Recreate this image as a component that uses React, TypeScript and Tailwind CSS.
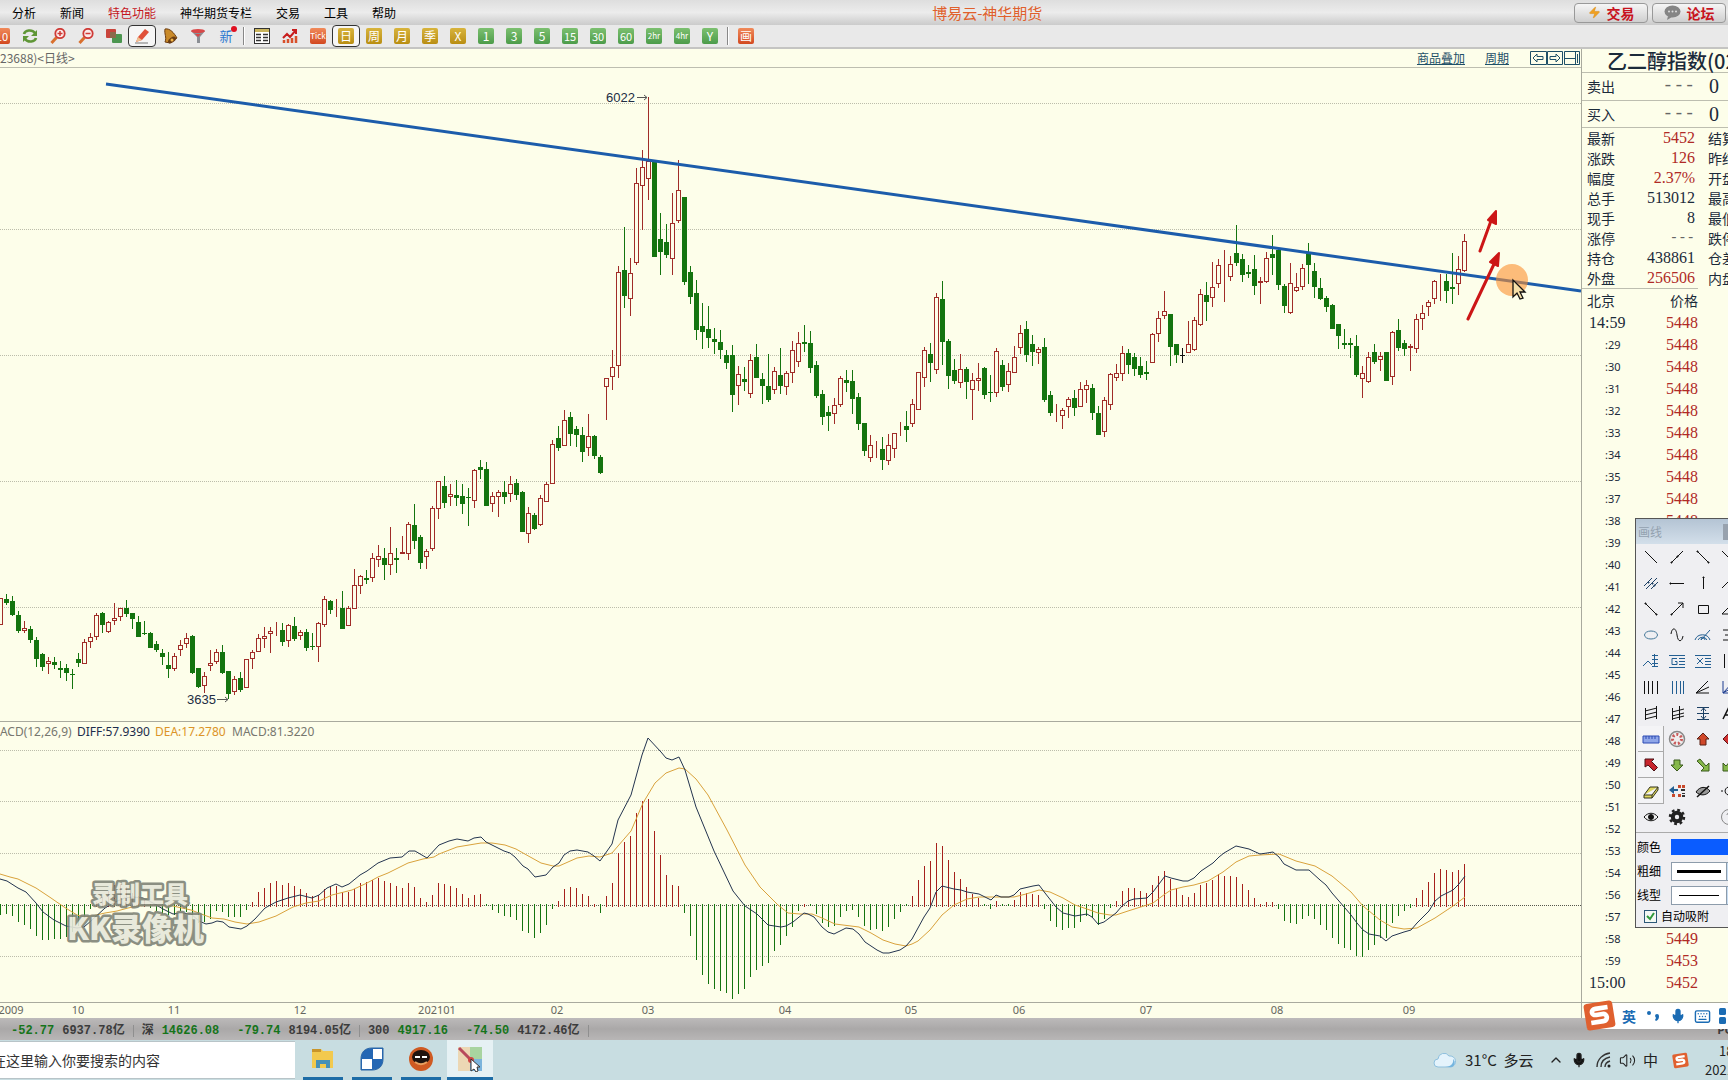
import React from 'react';
import { ChevronUp, Mic, Volume2, Zap, Keyboard } from 'lucide-react';

type Candle = [kind: 'r' | 'g' | 'k', high: number, top: number, bottom: number, low: number];

// One candle every 6 units: kind, high, body top, body bottom, low
const CANDLES: Candle[] = [
  ['r', 598, 598, 625, 625], ['g', 594, 599, 603, 605], ['g', 596, 601, 615, 616], ['g', 611, 615, 631, 633],
  ['r', 621, 628, 631, 633], ['g', 626, 629, 640, 643], ['g', 637, 640, 659, 667], ['g', 653, 654, 667, 671],
  ['r', 657, 661, 664, 674], ['g', 657, 662, 665, 669], ['g', 661, 668, 670, 678], ['g', 664, 668, 673, 681],
  ['g', 669, 674, 675, 689], ['g', 653, 659, 663, 667], ['r', 639, 642, 664, 664], ['r', 633, 637, 642, 648],
  ['r', 613, 615, 637, 640], ['g', 612, 613, 625, 633], ['r', 621, 622, 632, 633], ['r', 603, 618, 621, 625],
  ['r', 608, 608, 617, 621], ['g', 600, 608, 614, 617], ['g', 613, 613, 619, 629], ['g', 616, 622, 637, 637],
  ['g', 621, 633, 634, 635], ['g', 632, 633, 648, 648], ['g', 641, 644, 650, 652], ['g', 649, 653, 657, 665],
  ['g', 652, 665, 669, 678], ['r', 653, 656, 669, 671], ['r', 640, 645, 650, 656], ['r', 633, 638, 644, 648],
  ['g', 635, 636, 673, 674], ['g', 668, 668, 687, 688], ['r', 672, 676, 686, 693], ['r', 650, 663, 666, 671],
  ['r', 649, 652, 662, 664], ['g', 645, 652, 673, 674], ['g', 671, 671, 694, 699], ['r', 676, 679, 692, 695],
  ['g', 672, 678, 690, 692], ['r', 659, 659, 688, 688], ['r', 650, 652, 659, 669], ['r', 634, 638, 652, 652],
  ['r', 627, 636, 639, 648], ['r', 627, 631, 634, 653], ['r', 622, 630, 631, 636], ['g', 623, 630, 642, 646],
  ['r', 624, 625, 641, 647], ['g', 617, 626, 639, 641], ['r', 630, 632, 636, 640], ['g', 629, 632, 648, 651],
  ['g', 633, 646, 647, 650], ['r', 622, 623, 647, 662], ['r', 596, 599, 625, 627], ['g', 600, 601, 610, 614],
  ['r', 599, 609, 610, 617], ['g', 591, 608, 629, 629], ['r', 606, 608, 626, 626], ['r', 569, 585, 609, 609],
  ['r', 575, 576, 586, 594], ['g', 570, 578, 580, 584], ['r', 553, 558, 578, 582], ['r', 545, 556, 560, 567],
  ['g', 548, 558, 565, 580], ['r', 527, 553, 565, 575], ['g', 548, 558, 560, 573], ['r', 536, 552, 554, 554],
  ['r', 522, 524, 554, 560], ['g', 504, 525, 541, 549], ['g', 535, 537, 563, 569], ['r', 549, 551, 557, 569],
  ['r', 506, 508, 549, 551], ['r', 481, 481, 509, 519], ['g', 476, 486, 503, 508], ['r', 484, 494, 497, 506],
  ['g', 480, 495, 498, 506], ['g', 484, 496, 504, 514], ['g', 488, 497, 498, 526], ['r', 469, 470, 501, 508],
  ['g', 460, 467, 470, 479], ['g', 462, 469, 506, 506], ['r', 492, 496, 504, 512], ['r', 490, 492, 497, 517],
  ['g', 481, 492, 497, 504], ['r', 476, 484, 494, 502], ['g', 479, 483, 495, 500], ['g', 491, 492, 532, 532],
  ['r', 507, 513, 534, 543], ['g', 513, 515, 529, 530], ['r', 495, 498, 525, 526], ['r', 482, 484, 502, 502],
  ['r', 440, 444, 484, 484], ['g', 426, 438, 448, 451], ['r', 410, 420, 446, 446], ['g', 412, 417, 434, 446],
  ['g', 426, 429, 435, 447], ['g', 427, 435, 452, 462], ['r', 414, 436, 448, 456], ['g', 435, 436, 456, 459],
  ['g', 455, 457, 473, 474], ['r', 378, 378, 387, 420], ['r', 350, 367, 377, 390], ['r', 266, 272, 366, 378],
  ['g', 227, 270, 296, 308], ['r', 258, 273, 299, 316], ['r', 168, 183, 263, 265], ['r', 150, 167, 186, 230],
  ['r', 97, 161, 179, 200], ['g', 160, 161, 257, 257], ['g', 213, 239, 252, 275], ['g', 224, 242, 255, 258],
  ['r', 193, 223, 259, 275], ['r', 160, 190, 221, 223], ['g', 197, 197, 282, 285], ['g', 266, 272, 297, 304],
  ['g', 280, 293, 330, 340], ['g', 303, 326, 332, 349], ['g', 306, 329, 338, 348], ['g', 328, 339, 342, 354],
  ['g', 330, 342, 350, 359], ['g', 350, 355, 363, 369], ['g', 345, 355, 395, 412], ['r', 366, 374, 386, 405],
  ['g', 367, 379, 382, 391], ['r', 354, 360, 394, 398], ['g', 344, 357, 378, 378], ['g', 373, 379, 386, 404],
  ['g', 354, 386, 400, 402], ['r', 367, 371, 390, 394], ['g', 348, 375, 386, 394], ['r', 371, 373, 387, 395],
  ['r', 341, 350, 373, 383], ['r', 332, 343, 362, 367], ['g', 325, 342, 344, 352], ['g', 331, 343, 368, 373],
  ['g', 361, 365, 396, 398], ['g', 390, 394, 417, 425], ['g', 406, 412, 416, 431], ['r', 398, 405, 414, 424],
  ['r', 376, 378, 405, 407], ['g', 370, 380, 383, 392], ['g', 370, 381, 399, 414], ['g', 393, 397, 424, 430],
  ['g', 423, 423, 451, 456], ['r', 435, 445, 458, 462], ['r', 441, 443, 444, 458], ['g', 437, 449, 460, 470],
  ['r', 434, 445, 461, 465], ['r', 433, 433, 449, 458], ['r', 422, 432, 433, 436], ['g', 411, 426, 430, 442],
  ['r', 399, 404, 424, 427], ['r', 372, 372, 410, 410], ['r', 347, 350, 378, 387], ['g', 343, 354, 363, 382],
  ['r', 293, 297, 370, 374], ['g', 281, 299, 342, 365], ['g', 339, 341, 376, 389], ['g', 359, 370, 381, 384],
  ['r', 354, 369, 383, 388], ['g', 367, 369, 382, 399], ['r', 373, 380, 390, 420], ['r', 363, 378, 381, 391],
  ['g', 367, 368, 395, 399], ['g', 375, 392, 393, 402], ['r', 348, 351, 393, 397], ['g', 360, 365, 387, 391],
  ['r', 363, 371, 385, 392], ['r', 346, 357, 373, 373], ['r', 325, 333, 348, 354], ['g', 321, 329, 355, 362],
  ['g', 335, 344, 352, 366], ['r', 347, 349, 353, 364], ['g', 338, 347, 400, 402], ['g', 391, 395, 413, 416],
  ['r', 404, 410, 411, 422], ['r', 408, 410, 416, 429], ['r', 397, 399, 407, 418], ['g', 390, 398, 408, 416],
  ['r', 382, 389, 407, 407], ['r', 380, 385, 390, 403], ['g', 384, 388, 413, 420], ['g', 406, 413, 435, 435],
  ['r', 397, 400, 432, 437], ['r', 373, 374, 405, 410], ['r', 364, 373, 378, 381], ['r', 346, 353, 374, 381],
  ['g', 349, 353, 365, 374], ['g', 353, 357, 369, 376], ['g', 357, 366, 375, 378], ['g', 361, 372, 374, 380],
  ['r', 333, 334, 363, 363], ['r', 311, 318, 334, 342], ['r', 291, 311, 316, 319], ['g', 314, 314, 347, 366],
  ['g', 344, 344, 355, 363], ['k', 348, 355, 355, 363], ['r', 321, 344, 353, 353], ['r', 317, 320, 350, 351],
  ['r', 289, 294, 325, 326], ['g', 282, 295, 302, 321], ['r', 262, 287, 298, 307], ['r', 259, 265, 284, 288],
  ['r', 250, 279, 280, 302], ['r', 256, 264, 277, 281], ['g', 225, 253, 263, 266], ['g', 254, 259, 275, 282],
  ['g', 265, 272, 274, 278], ['g', 255, 269, 286, 295], ['r', 277, 281, 283, 304], ['r', 252, 258, 282, 283],
  ['g', 235, 254, 258, 275], ['g', 249, 250, 285, 290], ['g', 284, 286, 306, 313], ['r', 263, 283, 313, 314],
  ['r', 273, 287, 291, 292], ['r', 264, 268, 287, 290], ['g', 243, 254, 265, 284], ['g', 263, 271, 287, 298],
  ['g', 278, 288, 299, 300], ['g', 296, 298, 307, 312], ['g', 304, 305, 329, 329], ['g', 324, 324, 336, 349],
  ['g', 329, 343, 345, 349], ['g', 338, 343, 345, 358], ['g', 335, 346, 375, 377], ['r', 366, 373, 379, 398],
  ['r', 352, 357, 382, 383], ['g', 344, 352, 362, 364], ['r', 352, 356, 360, 371], ['g', 352, 352, 381, 381],
  ['r', 331, 332, 377, 385], ['g', 319, 330, 348, 351], ['g', 340, 343, 349, 356], ['r', 344, 346, 348, 371],
  ['r', 314, 319, 349, 353], ['r', 305, 313, 319, 330], ['r', 300, 302, 307, 316], ['r', 280, 281, 299, 304],
  ['r', 274, 283, 284, 301], ['g', 274, 281, 291, 303], ['g', 253, 287, 289, 304], ['r', 256, 269, 284, 295],
  ['r', 234, 241, 271, 272],
];

const HISTOGRAM = [
  -9, -8, -10, -16, -19, -23, -30, -34, -34, -33, -33, -31, -26, -20, -12, -3, 3, 8, 14, 20, 21, 18, 12, 9, 5,
  -2, -5, -8, -9, -9, -5, -6, -14, -17, -16, -13, -5, -6, -11, -11, -11, -4, 3, 13, 17, 22, 24, 20, 22, 19,
  16, 12, 9, 10, 16, 19, 19, 13, 13, 16, 22, 23, 25, 27, 24, 22, 19, 17, 22, 18, 7, 3, 10, 22, 21,
  19, 17, 11, 7, 10, 11, 0, -4, -7, -10, -11, -14, -25, -27, -32, -27, -19, -3, 4, 16, 18, 17, 11, 9, 1,
  -7, 9, 22, 52, 63, 69, 92, 104, 106, 74, 50, 30, 20, 19, -7, -30, -54, -69, -78, -83, -85, -87, -93, -88, -83,
  -71, -64, -60, -57, -45, -39, -30, -21, -5, 1, 0, -8, -17, -21, -20, -11, -5, -4, -11, -20, -24, -23, -25, -21, -13,
  -6, 0, 9, 25, 39, 44, 62, 59, 45, 33, 26, 18, 11, 7, 0, -3, 4, 0, 0, 5, 13, 12, 11, 10, -3,
  -15, -21, -24, -22, -22, -16, -10, -12, -19, -13, -2, 4, 14, 17, 17, 14, 12, 20, 29, 34, 26, 17, 10, 8, 12,
  20, 22, 25, 31, 29, 29, 28, 21, 15, 7, 1, 3, 3, -3, -15, -17, -18, -13, -10, -13, -19, -24, -32, -38, -42,
  -44, -50, -51, -44, -39, -32, -32, -17, -10, -5, -2, 7, 15, 23, 32, 36, 35, 33, 35, 41,
];

const DIFF =
  '0,879 7,881 18,888 26,892 36,903 43,912 54,920 66,926 77,928 84,927 92,920 105,908 115,902 125,898 133,897 143,898 153,903 163,909 173,914 181,913 191,914 199,921 206,924 212,923 217,921 223,922 229,927 235,928 241,929 247,926 255,919 265,908 276,902 288,898 300,895 312,898 319,895 327,888 336,884 342,887 349,884 360,875 367,871 378,863 390,858 402,857 409,851 415,851 427,858 439,845 449,841 457,839 468,841 474,838 481,837 486,842 504,851 510,853 515,857 523,866 528,869 535,877 546,875 553,867 559,863 564,855 570,851 577,850 588,852 594,856 600,861 612,844 618,820 631,795 642,755 648,738 661,752 666,758 672,760 679,757 685,770 696,807 714,851 733,891 745,906 757,914 768,925 781,927 786,926 793,922 804,913 808,914 814,917 822,927 828,932 834,934 840,931 846,928 853,929 859,934 865,942 871,946 877,950 883,953 889,953 900,950 906,946 912,939 918,928 924,917 930,908 936,892 942,886 954,889 961,890 967,892 979,894 991,900 996,895 1001,897 1009,897 1014,895 1020,889 1033,886 1039,885 1045,893 1056,907 1063,913 1075,916 1087,914 1092,917 1098,924 1104,922 1116,913 1122,906 1128,901 1134,899 1147,898 1153,892 1165,876 1171,878 1183,881 1188,881 1194,878 1201,871 1213,863 1219,857 1224,853 1236,846 1249,849 1260,854 1267,853 1273,852 1279,857 1284,864 1296,870 1309,870 1320,880 1326,885 1332,893 1345,908 1351,915 1357,923 1363,930 1369,934 1380,936 1386,941 1392,936 1404,932 1411,930 1417,923 1429,911 1435,901 1441,896 1453,890 1459,884 1465,876';

const DEA =
  '0,874 10,877 18,879 36,888 51,898 64,907 77,915 84,917 92,916 105,913 117,911 128,908 138,906 153,905 173,906 191,910 204,915 212,918 224,919 235,922 247,924 259,922 276,916 293,907 306,903 319,901 332,895 352,890 367,883 378,877 388,873 408,863 423,859 434,857 439,854 457,847 481,843 492,843 505,845 516,849 523,853 541,863 553,866 559,866 577,858 589,856 600,857 612,853 618,846 631,831 643,803 655,783 666,773 679,768 685,769 696,779 708,795 727,830 745,865 760,887 778,905 788,913 800,914 812,914 822,918 835,924 859,927 871,933 883,940 895,944 906,946 912,944 918,941 930,930 942,915 954,905 967,899 979,897 991,897 1014,897 1026,894 1039,890 1050,892 1063,898 1075,905 1087,909 1098,913 1110,915 1116,915 1128,911 1147,905 1153,903 1165,894 1171,890 1183,887 1194,885 1208,881 1223,872 1236,862 1249,856 1260,855 1279,854 1296,861 1315,866 1332,876 1351,892 1363,906 1380,920 1392,927 1404,929 1417,928 1435,918 1453,906 1465,897';

const MONTHS: [string, number][] = [
  ['10', 78], ['11', 174], ['12', 300], ['202101', 437], ['02', 557], ['03', 648], ['04', 785],
  ['05', 911], ['06', 1019], ['07', 1146], ['08', 1277], ['09', 1409],
];

const COLORS = { r: '#a02c28', g: '#14740f', k: '#111111' };

const MENU = ['分析', '新闻', '特色功能', '神华期货专栏', '交易', '工具', '帮助'];

function MenuBar() {
  return (
    <header className="flex h-[25px] shrink-0 items-center bg-gradient-to-b from-[#dedede] via-[#ececec] to-[#cbcbcb] px-3">
      <nav className="flex w-[54%] gap-6">
        {MENU.map((m) => (
          <button key={m} className={m === '特色功能' ? 'text-xs text-[#c4161c]' : 'text-xs text-black'}>
            {m}
          </button>
        ))}
      </nav>
      <h1 className="flex-1 text-[15px] leading-5 text-[#e0602c]">博易云-神华期货</h1>
      <div className="-mr-2.5 flex gap-1">
        <button className="flex h-5 w-[74px] items-center justify-center gap-1.5 rounded border border-[#999] bg-gradient-to-b from-[#f6f6f6] to-[#cfcfcf] text-sm leading-4 font-bold text-[#c8141e]">
          <Zap size={13} fill="#f0a020" stroke="#d98a10" strokeWidth={1} />
          交易
        </button>
        <button className="flex h-5 w-[74px] items-center justify-center gap-1.5 rounded border border-[#999] bg-gradient-to-b from-[#f6f6f6] to-[#cfcfcf] text-sm leading-4 font-bold text-[#c8141e]">
          <svg width="17" height="15" viewBox="0 0 17 15">
            <ellipse cx="8.500" cy="6.500" rx="8" ry="6" fill="#858585" />
            <path d="M4 11 3 15l5-3z" fill="#858585" />
            <circle cx="5" cy="6.500" r="1" fill="#ddd" />
            <circle cx="8.500" cy="6.500" r="1" fill="#ddd" />
            <circle cx="12" cy="6.500" r="1" fill="#ddd" />
          </svg>
          论坛
        </button>
      </div>
    </header>
  );
}

function Slot({ label, active, children }: { label: string; active?: boolean; children: React.ReactNode }) {
  return (
    <button
      aria-label={label}
      className={
        active
          ? 'flex h-[22px] w-7 shrink-0 items-center justify-center rounded border border-[#333] bg-[#f6f6f6]'
          : 'flex h-[22px] w-7 shrink-0 items-center justify-center'
      }
    >
      {children}
    </button>
  );
}

function Tile({ text, tone }: { text: string; tone: 'gold' | 'green' | 'red' }) {
  const bg = {
    gold: 'bg-gradient-to-b from-[#d8b43c] to-[#b98e10]',
    green: 'bg-gradient-to-b from-[#7cc070] to-[#4c9c4a]',
    red: 'bg-gradient-to-b from-[#f08a5a] to-[#d2481e]',
  }[tone];
  const size = text.length > 2 ? 'text-[8px]' : text.length > 1 ? 'text-[11px]' : 'text-xs';
  return (
    <span className={`flex h-4 w-4 items-center justify-center rounded-xs leading-4 text-white ${size} ${bg}`}>{text}</span>
  );
}

function Magnifier({ sign }: { sign: string }) {
  return (
    <svg width="16" height="16" viewBox="0 0 16 16" fill="none">
      <path d="M6.500 9.500 1.500 15" stroke="#d9702e" strokeWidth="3" />
      <circle cx="10" cy="5.500" r="4.700" fill="#fbeaea" stroke="#cf3a36" strokeWidth="1.800" />
      <path d={sign} stroke="#cf3a36" strokeWidth="1.500" />
    </svg>
  );
}

function Toolbar() {
  return (
    <div className="flex h-6 shrink-0 items-start overflow-hidden border-b-2 border-[#c4c4c2] bg-[#e9e9e9]">
      <div className="-ml-3 flex items-center">
        <Slot label="报价"><Tile text="10" tone="red" /></Slot>
        <Slot label="刷新">
          <svg width="16" height="16" viewBox="0 0 16 16" fill="none" stroke="#5f9636" strokeWidth="2.600">
            <path d="M2 6c1-4 8-5 11-1M14 10c-1 4-8 5-11 1" />
            <path d="M15 2v6H9zM1 14V8h6z" fill="#5f9636" stroke="none" />
          </svg>
        </Slot>
        <Slot label="放大"><Magnifier sign="M7.500 5.500h5M10 3v5" /></Slot>
        <Slot label="缩小"><Magnifier sign="M7.500 5.500h5" /></Slot>
        <Slot label="叠加">
          <svg width="16" height="16" viewBox="0 0 16 16">
            <rect x="0" y="1" width="10" height="9" rx="1" fill="#c9453c" />
            <rect x="6" y="6" width="10" height="9" rx="1" fill="#4c9650" />
            <rect x="4" y="4" width="6" height="6" fill="#8c6a4c" />
          </svg>
        </Slot>
        <Slot label="画线" active>
          <svg width="16" height="16" viewBox="0 0 16 16">
            <path d="M2 14 4 9 11 1l4 3-7 8z" fill="#e0513a" />
            <path d="M2 14 4 9l4 3z" fill="#f0c090" />
            <path d="M1 15h13" stroke="#777" />
          </svg>
        </Slot>
        <Slot label="预警">
          <svg width="16" height="16" viewBox="0 0 16 16">
            <path d="M3 1c5-1 9 4 12 9l-7 5-5-1C5 9 2 6 3 1z" fill="#c98a2a" stroke="#6b3c12" />
            <ellipse cx="10" cy="12" rx="4.500" ry="2.500" transform="rotate(-35 10 12)" fill="#6b3c12" />
            <circle cx="10" cy="12" r="1.500" fill="#f2b84a" />
          </svg>
        </Slot>
        <Slot label="筛选">
          <svg width="16" height="16" viewBox="0 0 16 16">
            <path d="M1 3h14l-5 6v6H7V9z" fill="#8b8f94" />
            <ellipse cx="8" cy="3" rx="7" ry="2" fill="#d94848" />
            <path d="M5 6h6L8 9z" fill="#d94848" />
          </svg>
        </Slot>
        <Slot label="新">
          <span className="relative text-[13px] leading-4 text-[#2d78d0]">
            新<i className="absolute -top-0.5 -right-1 h-1.5 w-1.5 rounded-full bg-[#e01020]" />
          </span>
        </Slot>
        <span className="mx-[3px] h-[18px] w-0.5 border-r border-white bg-[#888]" />
        <Slot label="列表">
          <svg width="16" height="16" viewBox="0 0 16 16">
            <rect x="0.500" y="0.500" width="15" height="15" fill="#fff" stroke="#333" />
            <path d="M1 1h14v3H1z" fill="#c9b45c" />
            <path d="M2 6.500h5M9 6.500h5M2 9.500h5M9 9.500h5M2 12.500h5M9 12.500h5" stroke="#333" strokeWidth="1.500" />
          </svg>
        </Slot>
        <Slot label="走势">
          <svg width="16" height="16" viewBox="0 0 16 16" fill="none">
            <path d="M1 10 5 6l3 3 6-7M10 2h4v4" stroke="#c81e1e" strokeWidth="2" />
            <path d="M2 15v-3M6 15v-4M10 15v-5M14 15V8" stroke="#d8502a" strokeWidth="2.500" />
          </svg>
        </Slot>
        <Slot label="Tick"><Tile text="Tick" tone="red" /></Slot>
        <Slot label="日线" active><Tile text="日" tone="gold" /></Slot>
        {['周', '月', '季', 'X'].map((t) => (
          <Slot key={t} label={t}><Tile text={t} tone="gold" /></Slot>
        ))}
        {['1', '3', '5', '15', '30', '60', '2hr', '4hr', 'Y'].map((t) => (
          <Slot key={t} label={t}><Tile text={t} tone="green" /></Slot>
        ))}
        <span className="mx-[3px] h-[18px] w-0.5 border-r border-white bg-[#888]" />
        <Slot label="画"><Tile text="画" tone="red" /></Slot>
      </div>
    </div>
  );
}

function ChartHeader() {
  return (
    <div className="flex h-[19px] shrink-0 items-center justify-between border-b border-[#bdbeb0] text-xs leading-4 text-[#666]">
      <span>23688)&lt;日线&gt;</span>
      <div className="flex items-center gap-5 text-[#1f5068]">
        <a href="#overlay" className="underline">商品叠加</a>
        <a href="#period" className="underline">周期</a>
        <svg width="52" height="15" viewBox="0 0 52 15" fill="none" stroke="#1f5068">
          <path d="M1.500.5h16v13h-16zM18.500.5h15v13h-15zM35.500.5h15v13h-15z" />
          <path d="m4 7 4-4v2.500h6v3H8V11zM31 7l-4-4v2.500h-6v3h6V11zM36 7.500h10M46.500 1v13M48.500 3v9" />
        </svg>
      </div>
    </div>
  );
}

function Chart() {
  return (
    <svg viewBox="0 68 1581 950" className="min-h-0 w-full flex-1" fontFamily="'Noto Sans','Noto Sans CJK SC',sans-serif" fontSize="12">
      {/* price and indicator grid */}
      <g stroke="#bcbdab" strokeDasharray="1 1" shapeRendering="crispEdges">
        {[103, 229, 355, 481, 607, 750, 801, 853, 956].map((y) => (
          <line key={y} x1="0" x2="1581" y1={y + 0.5} y2={y + 0.5} />
        ))}
        <line x1="0" x2="1581" y1="905.500" y2="905.500" stroke="#55564c" />
      </g>
      <g stroke="#a9aa9e" shapeRendering="crispEdges">
        <line x1="0" x2="1581" y1="721.500" y2="721.500" />
        <line x1="0" x2="1581" y1="1002.500" y2="1002.500" />
      </g>

      <g shapeRendering="crispEdges">
        {CANDLES.map(([kind, high, top, bottom, low], i) => {
          const x = i * 6;
          const color = COLORS[kind];
          if (kind === 'r') {
            return (
              <g key={i} stroke={color} fill="#fdfeea">
                <line x1={x + 0.5} x2={x + 0.5} y1={high} y2={low} />
                <rect x={x - 1.5} y={top + 0.5} width="4" height={Math.max(bottom - top - 1, 0)} />
              </g>
            );
          }
          return (
            <g key={i} fill={color}>
              <rect x={x} y={high} width="1" height={low - high} />
              <rect x={x - 2} y={top} width="5" height={Math.max(bottom - top, 1)} />
            </g>
          );
        })}
        {HISTOGRAM.map((v, i) => (
          <rect
            key={i}
            x={i * 6}
            y={v > 0 ? 905 - v : 904}
            width="1"
            height={Math.abs(v) + 2}
            fill={v > 0 ? '#a5201c' : '#14740f'}
          />
        ))}
      </g>

      <polyline points={DEA} fill="none" stroke="#d9a23c" />
      <polyline points={DIFF} fill="none" stroke="#23344f" />

      {/* extremes */}
      <g dominantBaseline="central" fill="#222d44" fontSize="13" fontFamily="'Liberation Sans',sans-serif">
        <text x="606" y="97">6022</text>
        <text x="187" y="699">3635</text>
      </g>
      <path d="M637 97.500h10M644 95l3 2.500-3 2.500M217 699.500h11M225 697l3 2.500-3 2.500" fill="none" stroke="#555" />

      <g dominantBaseline="central">
        <text x="-11" y="731" fill="#77776f">MACD(12,26,9)</text>
        <text x="77" y="731" fill="#1c2c4c">DIFF:57.9390</text>
        <text x="155" y="731" fill="#dc9428">DEA:17.2780</text>
        <text x="232" y="731" fill="#77776f">MACD:81.3220</text>
      </g>

      <g dominantBaseline="central" textAnchor="middle" fill="#66665e" fontSize="11">
        <text x="11" y="1009">2009</text>
        {MONTHS.map(([label, x]) => (
          <text key={label} x={x} y="1009">{label}</text>
        ))}
      </g>

      {/* recorder watermark */}
      <g
        fontFamily="'Noto Sans CJK SC',sans-serif"
        fontWeight="900"
        fill="#e6e7da"
        stroke="#7f8477"
        strokeWidth="5"
        strokeLinejoin="round"
        paintOrder="stroke"
        dominantBaseline="central"
        opacity="0.900"
      >
        <text x="92" y="892" fontSize="24">录制工具</text>
        <text x="67" y="926" fontSize="31">KK录像机</text>
      </g>

      {/* trend line and hand drawn arrows */}
      <line x1="106" y1="84" x2="1581" y2="291" stroke="#1c5cab" strokeWidth="3" />
      <circle cx="1512" cy="280" r="16" fill="#fb8f2e" opacity="0.600" />
      <g stroke="#cc1616" strokeWidth="3" fill="#cc1616" strokeLinecap="round" strokeLinejoin="round">
        <path d="M1480 251 1492 218M1468 319 1495 262" />
        <path d="M1496 211 1488 220 1496 224zM1499 253 1490 262 1498 266z" strokeWidth="2" />
      </g>
      <path d="M1513 280v17l4-4 3 6 3-1-3-6h5z" fill="#f6dfa8" stroke="#111" strokeWidth="1.300" />
    </svg>
  );
}

const QUOTES: [string, string, string, boolean][] = [
  ['最新', '5452', '结算', true],
  ['涨跌', '126', '昨结', true],
  ['幅度', '2.37%', '开盘', true],
  ['总手', '513012', '最高', false],
  ['现手', '8', '最低', false],
  ['涨停', '---', '跌停', false],
  ['持仓', '438861', '仓差', false],
  ['外盘', '256506', '内盘', true],
];

const TICKS = [
  '14:59', ':29', ':30', ':31', ':32', ':33', ':34', ':35', ':37', ':38', ':39', ':40', ':41', ':42', ':43', ':44',
  ':45', ':46', ':47', ':48', ':49', ':50', ':51', ':52', ':53', ':54', ':56', ':57', ':58', ':59', '15:00',
];

const LAST_PRICES: Record<string, string> = { ':58': '5449', ':59': '5453', '15:00': '5452' };

function QuotePanel() {
  return (
    <aside className="relative w-[147px] shrink-0 overflow-hidden border-l border-[#a9aa9e] text-sm text-[#1b2a3a]">
      <h2 className="h-6 border-b border-[#bdbeb0] pl-[25px] text-xl leading-6 font-medium whitespace-nowrap">
        乙二醇指数(023688)
      </h2>
      <table className="w-[180px] table-fixed border-collapse whitespace-nowrap">
        <colgroup>
          <col className="w-10" />
          <col className="w-[73px]" />
          <col />
        </colgroup>
        <tbody>
          {['卖出', '买入'].map((side) => (
            <tr key={side} className="h-[27px] border-b border-[#bdbeb0]">
              <th className="pl-[5px] text-left font-normal">{side}</th>
              <td className="text-right font-['Liberation_Mono'] text-lg leading-5 text-[#666]">---</td>
              <td className="pl-3.5 font-['Liberation_Serif'] text-xl leading-5">0</td>
            </tr>
          ))}
          {QUOTES.map(([label, value, next, hot]) => (
            <tr key={label} className="h-5 leading-5">
              <th className="pl-[5px] text-left font-normal">{label}</th>
              <td
                className={
                  value === '---'
                    ? "text-right font-['Liberation_Mono'] leading-5 text-[#666]"
                    : hot
                      ? "text-right font-['Liberation_Serif'] text-base leading-5 text-[#b02a26]"
                      : "text-right font-['Liberation_Serif'] text-base leading-5"
                }
              >
                {value}
              </td>
              <td className="pl-[13px]">{next}</td>
            </tr>
          ))}
        </tbody>
      </table>
      <table className="w-[116px] table-fixed border-collapse border-t border-[#bdbeb0] whitespace-nowrap">
        <thead>
          <tr className="h-6">
            <th className="pl-[5px] text-left leading-5 font-normal">北京</th>
            <th className="text-right leading-5 font-normal">价格</th>
          </tr>
        </thead>
        <tbody className="font-['Liberation_Serif'] text-base leading-5">
          {TICKS.map((t) => (
            <tr key={t} className="h-[22px]">
              <td className={t.length > 3 ? 'pl-[7px]' : "pl-[23px] font-['Noto_Sans'] text-[11px] leading-5"}>{t}</td>
              <td className="text-right text-[#b02a26]">{LAST_PRICES[t] ?? '5448'}</td>
            </tr>
          ))}
        </tbody>
      </table>
      <div className="mt-2 border-t border-[#a9aa9e]" />
      <DrawingTools />
    </aside>
  );
}

// 18x18 glyphs, four to a row
const TOOLS: [string, React.ReactNode][] = [
  ['直线', <path d="M3 3 15 15" />],
  ['射线', <path d="M3 15 15 3M3 14h1v1H3zM9 8h1v1H9z" />],
  ['线段', <path d="M3 3 15 15M3 3h1v1H3zM14 14h1v1h-1z" />],
  ['折线', <path d="M2 3 8 9l8-4" />],
  ['平行线', <path d="M2 12 10 4M4 15 15 4M9 15l7-7M6 8h1v1H6zM10 9h1v1h-1zM12 11h1v1h-1z" stroke="#1d4064" />],
  ['水平线', <path d="M2 9.500h14M2 9h1v1H2z" />],
  ['垂直线', <path d="M9.500 3v12M9 3h1v1H9z" />],
  ['角度线', <path d="M2 14 9 7l7 7" />],
  ['箭头', <path d="M3 3 15 15M14 14h1v1h-1zM3 3h1v1H3z" />],
  ['箭头线', <path d="M3 15 15 3M10 3h5v5M3 14h1v1H3z" />],
  ['矩形', <path d="M4.500 5.500h10v8h-10z" />],
  ['三角形', <path d="M2 14 12 4v10z" />],
  ['椭圆', <ellipse cx="9" cy="9" rx="6.500" ry="4" stroke="#46799a" />],
  ['波浪', <path d="M3 8c1-7 5-7 6 1s5 7 6 1" />],
  ['圆弧', <path d="M1 14a8 8 0 0 1 15 0M4 14a5 5 0 0 1 9 0M7 14a2 2 0 0 1 4 0M7 14 16 4" stroke="#235f92" />],
  ['通道', <path d="M3 4h12M5 9h10M3 14h12" />],
  ['波幅', <path d="M1 14 6 9l4 4M12.500 2v13M10 3.500h6M10 7.500h6M10 11.500h6M10 14.500h6" stroke="#235f92" />],
  ['黄金分割', <path d="M1 3.500h16M11 6.500h6M11 9.500h6M11 12.500h6M1 15.500h16M9 6.500H4v6h5v-3H7" stroke="#235f92" />],
  ['百分比', <path d="M1 3.500h16M11 6.500h6M11 9.500h6M11 12.500h6M1 15.500h16M3 6l6 6M9 6l-6 6" stroke="#235f92" />],
  ['周期线', <path d="M4.500 2v14M9.500 2v14M14.500 2v14" />],
  ['等距线', <path d="M2.500 3v13M6.500 3v13M10.500 3v13M15.500 3v13" />],
  ['时间线', <path d="M4.500 3v13M8.500 3v13M12.500 3v13M15.500 3v13" stroke="#235f92" />],
  ['扇形', <path d="M2 15 14 3M2 15 15 9M2 15h13" />],
  ['甘氏线', <path d="M3 3v12h12M3 15 14 3M3 15 15 8" stroke="#1d3c90" />],
  ['回归带', <path d="M3.500 4v12M14.500 2v13M3 7l12-3M3 11l12-3M3 15l12-3" />],
  ['回归线', <path d="M4.500 4v12M11.500 2v14M4 8l12-3M4 12l12-3M4 15l12-3" />],
  ['测距', <path d="M3 3.500h12M3 9.500h12M3 15.500h12M9.500 3v12M7 7l2.500-3L12 7M7 12l2.500 3 2.500-3" stroke="#1d4064" />],
  ['文字', <path d="M3 15 9 3l6 12M5 11h8" strokeWidth="1.500" />],
  ['标尺', <path d="M1 6h16v7H1zM4 6v3M7 6v3M10 6v3M13 6v3" fill="#8fa6e8" stroke="#2c4bb4" />],
  ['罗盘', <g><circle cx="9" cy="9" r="7.500" fill="#eee" stroke="#888" strokeWidth="1.500" /><circle cx="9" cy="9" r="4.500" fill="none" stroke="#c85a5a" strokeWidth="3" strokeDasharray="2 2" /></g>],
  ['上箭头', <path d="m9 3 6 6h-3v6H6V9H3z" fill="#d0482a" stroke="#5a2014" />],
  ['红标', <path d="m9 3 6 6-6 6-6-6z" fill="#d03030" stroke="#5a1414" />],
  ['左上箭头', <path d="M3 3h9L9.500 5.500l6 6-3.500 3.500-6-6L3 11z" fill="#c8242c" stroke="#4a1014" />],
  ['下箭头', <path d="M9 15 3 9h3V4h6v5h3z" fill="#86b84a" stroke="#3a5a1c" />],
  ['右下箭头', <path d="M15 15H7l3-3-7-7 3-2 6 7 3-3z" fill="#86b84a" stroke="#3a5a1c" />],
  ['左下箭头', <path d="M3 15h8l-3-3 7-7-3-2-6 7-3-3z" fill="#86b84a" stroke="#3a5a1c" />],
  ['橡皮擦', <path d="M2 13 8 5h8l-6 8zM2 13v3h8l6-8V5M10 13v3" fill="#e0d860" stroke="#33331c" />],
  ['清除', <g stroke="none"><path d="M1 8 6 4v3h4v2H6v3z" fill="#235f92" /><path d="M10 3h3v3h-3zM14 3h3v3h-3zM4 12h3v3H4zM10 12h3v3h-3z" fill="#c8482a" /><path d="M13 7h4v2h-4zM14 11h3v1h-3zM14 13h3v2h-3z" fill="#333" /></g>],
  ['隐藏', <g><path d="M2 10c4-6 10-6 14-1-4 5-10 5-14 1z" fill="#999" /><path d="M3 15 15 4" strokeWidth="1.500" /></g>],
  ['显示全部', <path d="M9 5a4 4 0 1 0 .1 0M9 1v2M9 15v2M1 9h2M15 9h2" />],
  ['显示', <g><path d="M2 9c4-5 10-5 14 0-4 5-10 5-14 0z" fill="#eee" /><circle cx="9" cy="9" r="2.500" fill="#111" /></g>],
  ['设置', <g fill="none" stroke="#222"><circle cx="9" cy="9" r="4.200" strokeWidth="4" /><circle cx="9" cy="9" r="7" strokeWidth="2.500" strokeDasharray="2.750 2.750" /></g>],
  ['', null],
  ['帮助', <g stroke="#888"><circle cx="9" cy="9" r="7.500" /><path d="M7 7c0-3 5-3 5 0 0 2-3 2-3 4" /></g>],
];

const RAISED = ['标尺', '左上箭头', '橡皮擦'];

function DrawingTools() {
  return (
    <section className="absolute top-[469px] left-[53px] w-[120px] border border-[#555] bg-[#efeff2] text-xs text-black">
      <div className="flex h-[25px] items-center justify-between bg-gradient-to-b from-[#b4c4d4] to-[#d3dfea] pl-0.5 text-[#93a1af]">
        画线
        <button aria-label="关闭" className="h-4 w-[31px] bg-[#98a2ae]" />
      </div>
      <div className="grid grid-cols-[26px_26px_26px_26px] pl-0.5">
        {TOOLS.map(([name, glyph], i) =>
          name ? (
            <button
              key={name}
              aria-label={name}
              className={
                RAISED.includes(name)
                  ? 'flex h-[26px] items-center justify-center border-r border-b border-[#aaa] bg-[#f4f4f6]'
                  : 'flex h-[26px] items-center justify-center'
              }
            >
              <svg width="18" height="18" viewBox="0 0 18 18" fill="none" stroke="#111">{glyph}</svg>
            </button>
          ) : (
            <span key={i} />
          ),
        )}
      </div>
      <div className="mt-0.5 grid grid-cols-[34px_84px] items-center gap-y-1 border-t border-[#aaa] pt-1 pl-px">
        <label htmlFor="pen-color" className="h-5 leading-5">颜色</label>
        <button id="pen-color" aria-label="颜色" className="h-4 bg-[#0a5cff]" />
        <label htmlFor="pen-width" className="leading-5">粗细</label>
        <PenSelect id="pen-width" thick />
        <label htmlFor="pen-style" className="leading-5">线型</label>
        <PenSelect id="pen-style" />
      </div>
      <label className="flex h-[22px] items-center gap-1 pl-2">
        <input type="checkbox" defaultChecked className="peer sr-only" />
        <svg width="13" height="13" viewBox="0 0 13 13" fill="none">
          <rect x="0.500" y="0.500" width="12" height="12" fill="#f4f8f4" stroke="#2c5878" />
          <path d="m3 6 3 3 4-6" stroke="#2f9a3a" strokeWidth="2" />
        </svg>
        自动吸附
      </label>
    </section>
  );
}

function PenSelect({ id, thick }: { id: string; thick?: boolean }) {
  return (
    <div className="relative h-[19px]">
      <select id={id} className="h-full w-full appearance-none border border-[#8d9cab] bg-white" />
      <span className="pointer-events-none absolute inset-y-0 left-0 flex w-14 items-center justify-center border-r border-[#8d9cab]">
        <i className={thick ? 'h-[3px] w-11 bg-black' : 'h-px w-10 bg-black'} />
      </span>
      <span className="pointer-events-none absolute inset-y-px right-px left-14 bg-[#c6dcf2]" />
    </div>
  );
}

function StatusBar() {
  return (
    <div className="flex h-[22px] shrink-0 items-center justify-between overflow-hidden bg-gradient-to-b from-[#bcbaba] via-[#aaa8a8] to-[#b8b6b6] pt-[3px] pl-[11px] font-['Liberation_Mono','Noto_Sans_CJK_SC'] text-xs font-bold whitespace-nowrap text-[#3c3c3c]">
      <div className="flex items-center gap-2">
        <span className="text-[#15741a]">-52.77</span>
        <span>6937.78亿</span>
        <i className="h-3 w-px bg-[#8f8f8f]" />
        <span>深</span>
        <span className="mr-2.5 text-[#15741a]">14626.08</span>
        <span className="text-[#15741a]">-79.74</span>
        <span>8194.05亿</span>
        <i className="h-3 w-px bg-[#8f8f8f]" />
        <span>300</span>
        <span className="mr-2.5 text-[#15741a]">4917.16</span>
        <span className="text-[#15741a]">-74.50</span>
        <span>4172.46亿</span>
        <i className="h-3 w-px bg-[#8f8f8f]" />
      </div>
      <span className="-mr-1">PC</span>
    </div>
  );
}

function SogouLogo({ size }: { size: number }) {
  return (
    <svg width={size} height={size} viewBox="0 0 32 32">
      <g transform="rotate(-9 16 16)">
        <rect x="2" y="3" width="28" height="26" rx="3" fill="#e0602f" />
        <path d="M25 9H13c-5 0-5 6 0 6h6c5 0 5 7 0 7H7" fill="none" stroke="#fff" strokeWidth="4.500" />
      </g>
    </svg>
  );
}

function ImeBar() {
  return (
    <div className="absolute right-0 bottom-[51px] flex h-[26px] w-[141px] items-center gap-2.5 bg-white pl-[35px] text-[#1b6cb4]">
      <span className="absolute -top-1 -left-1">
        <SogouLogo size={33} />
      </span>
      <span className="shrink-0 text-sm leading-5 font-bold">英</span>
      <svg width="14" height="12" viewBox="0 0 14 12" fill="#1b6cb4" className="shrink-0">
        <circle cx="3" cy="3" r="2" />
        <path d="M9 6a2 2 0 1 1 4 0c0 3-1 4-3 5l-1-1 1-2z" />
      </svg>
      <Mic size={16} fill="#1b6cb4" className="shrink-0" />
      <Keyboard size={17} className="-ml-0.5 shrink-0" />
      <svg width="16" height="16" viewBox="0 0 16 16" fill="#1b6cb4" className="-ml-0.5 shrink-0">
        <rect width="7" height="7" rx="1.500" />
        <rect x="9" width="7" height="7" rx="1.500" />
        <rect y="9" width="7" height="7" rx="1.500" />
        <rect x="9" y="9" width="7" height="7" rx="1.500" />
      </svg>
    </div>
  );
}

function TaskButton({ label, active, children }: { label: string; active?: boolean; children: React.ReactNode }) {
  return (
    <button
      aria-label={label}
      className={
        active
          ? '-ml-[3px] flex h-full w-[46px] items-center justify-center border-b-[3px] border-[#1d6ca6] bg-[#e6f1f4]'
          : 'mr-[9px] flex h-full w-10 items-center justify-center border-b-[3px] border-[#1d6ca6]'
      }
    >
      {children}
    </button>
  );
}

function Taskbar() {
  return (
    <footer className="flex h-10 shrink-0 items-center overflow-hidden bg-[#c8dde1] whitespace-nowrap">
      <input
        aria-label="搜索"
        type="text"
        readOnly
        value="在这里输入你要搜索的内容"
        className="-ml-2 h-[38px] w-[303px] border-y border-[#b8c4c8] bg-white text-sm text-[#333] outline-none"
      />
      <div className="ml-2 flex h-full">
        <TaskButton label="文件资源管理器">
          <svg width="24" height="22" viewBox="0 0 24 22">
            <path d="M1 1h9l2 2h10v17H1z" fill="#f2c94e" />
            <path d="M1 1h9v3H1z" fill="#c9952a" />
            <path d="M5 12h14v8h-4v-4h-6v4H5z" fill="#4690b8" />
          </svg>
        </TaskButton>
        <TaskButton label="行情">
          <svg width="24" height="24" viewBox="0 0 24 24">
            <path d="M12 1h11v11c0 7-4 11-11 11H1V12C1 5 5 1 12 1z" fill="#2467b4" />
            <path d="M13 2h9v10h-9zM2 12h10v10H2z" fill="#fff" />
            <path d="M12 1h11v11c0 7-4 11-11 11H1V12C1 5 5 1 12 1z" fill="none" stroke="#2b66a6" />
          </svg>
        </TaskButton>
        <TaskButton label="博易云">
          <svg width="26" height="26" viewBox="0 0 26 26">
            <ellipse cx="13" cy="13" rx="12" ry="12" fill="#cf5a22" />
            <ellipse cx="13" cy="11" rx="9" ry="7" fill="#21140f" />
            <path d="M7 11h5M14 11h5" stroke="#fff" strokeWidth="2" />
            <path d="M7 16c4 3 8 3 12 0" stroke="#e8a060" strokeWidth="2" fill="none" />
          </svg>
        </TaskButton>
        <TaskButton label="录像机" active>
          <svg width="26" height="26" viewBox="0 0 26 26">
            <path d="M1 1h24v24H1z" fill="#a8d4a0" />
            <path d="M1 1h12v24H1z" fill="#ecd7b4" />
            <path d="M13 13h12v12H13z" fill="#7cb4dc" />
            <path d="m2 2 12 12" stroke="#b84a5c" strokeWidth="3" />
            <circle cx="14" cy="14" r="3" fill="#d04444" />
            <path d="M14 13v12l3-2 2 3 2-1-1-4h3z" fill="#fff" stroke="#333" />
          </svg>
        </TaskButton>
      </div>
      <div className="ml-auto flex items-center text-[#222]">
        <svg width="24" height="18" viewBox="0 0 24 18" className="mr-2">
          <path d="M5 16a4 4 0 0 1 0-8 6 6 0 0 1 11-3 5 5 0 0 1 2 11z" fill="#e4f3fc" stroke="#8fc0de" />
          <path d="M12 16c6 0 9-4 8-8 3 2 2 8-2 8z" fill="#74b4de" />
        </svg>
        <span className="w-[83px] text-[15px]">31°C&nbsp; 多云</span>
        <ChevronUp size={16} className="mr-[7px]" />
        <Mic size={16} fill="#111" className="mr-[9px]" />
        <svg width="16" height="16" viewBox="0 0 16 16" fill="none" stroke="#333" className="mr-[7px]">
          <path d="M1 15C1 7 7 2 14 1M5 15c0-6 4-9 9-10M9 15c0-3 2-5 5-6" strokeWidth="1.400" />
          <circle cx="13" cy="14" r="1.500" fill="#222" stroke="none" />
        </svg>
        <Volume2 size={17} strokeWidth={1.5} className="mr-[7px]" />
        <span className="mr-3.5 text-[15px]">中</span>
        <SogouLogo size={17} />
      </div>
      <div className="ml-4 w-[23px] text-[13px] leading-[19px] text-[#222]">
        <div className="pl-3.5">18:30</div>
        <div>2021/9/8</div>
      </div>
    </footer>
  );
}

export default function App() {
  return (
    <div className="relative flex h-screen flex-col overflow-hidden bg-[#fdfeea] font-['Noto_Sans_CJK_SC',sans-serif]">
      <MenuBar />
      <Toolbar />
      <main className="flex min-h-0 flex-1">
        <div className="flex min-w-0 flex-1 flex-col">
          <ChartHeader />
          <Chart />
        </div>
        <QuotePanel />
      </main>
      <StatusBar />
      <Taskbar />
      <ImeBar />
    </div>
  );
}
